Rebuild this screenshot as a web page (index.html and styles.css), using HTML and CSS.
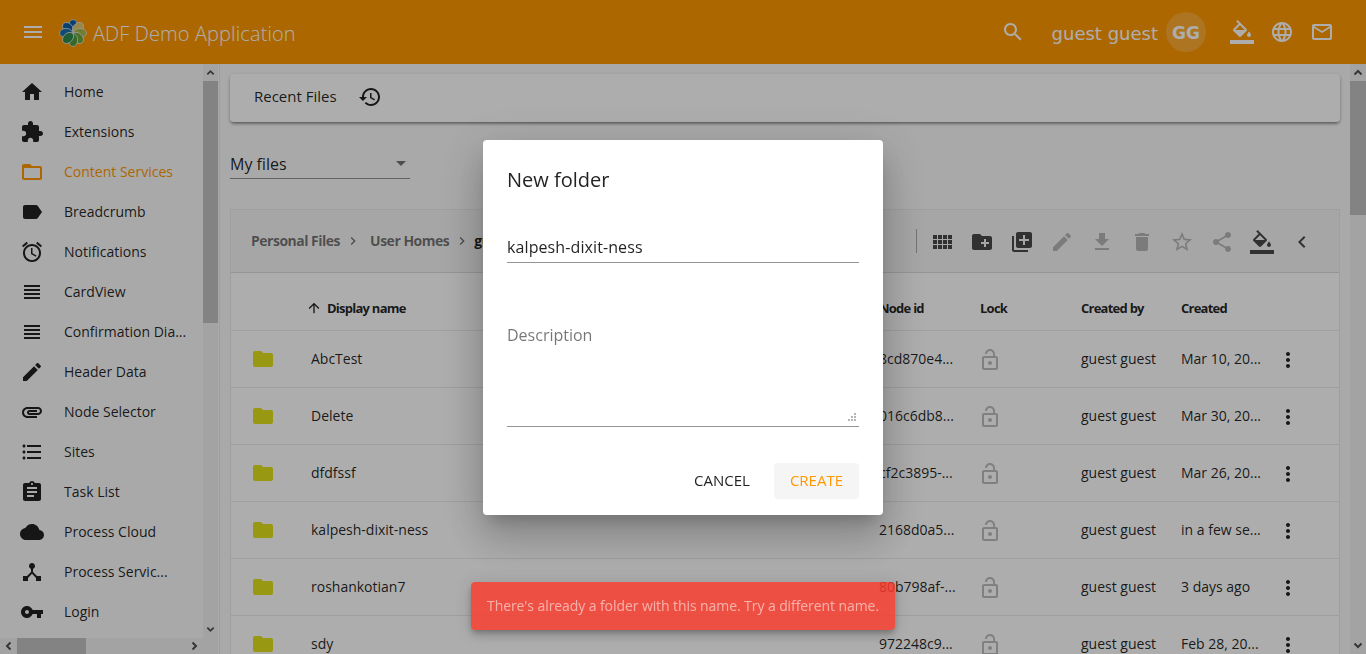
FILE: index.html
```html
<!DOCTYPE html>
<html lang="en">
<head>
    <meta charset="UTF-8">
    <meta name="viewport" content="width=device-width, initial-scale=1.0">
    <title>ADF Demo Application</title>
    <link rel="stylesheet" href="styles.css">
</head>
<body>

    <svg class="sprite" aria-hidden="true">
        <symbol id="i-menu" viewBox="0 0 24 24"><path d="M3 18h18v-2H3v2zm0-5h18v-2H3v2zm0-7v2h18V6H3z"/></symbol>
        <symbol id="i-home" viewBox="0 0 24 24"><path d="M10 20v-6h4v6h5v-8h3L12 3 2 12h3v8z"/></symbol>
        <symbol id="i-extension" viewBox="0 0 24 24"><path d="M20.5 11H19V7c0-1.1-.9-2-2-2h-4V3.5C13 2.12 11.88 1 10.5 1S8 2.12 8 3.5V5H4c-1.1 0-1.99.9-1.99 2v3.8H3.5c1.49 0 2.7 1.21 2.7 2.7s-1.21 2.7-2.7 2.7H2V20c0 1.1.9 2 2 2h3.8v-1.5c0-1.49 1.21-2.7 2.7-2.7 1.49 0 2.7 1.21 2.7 2.7V22H17c1.1 0 2-.9 2-2v-4h1.5c1.38 0 2.5-1.12 2.5-2.5S21.88 11 20.5 11z"/></symbol>
        <symbol id="i-folder-open" viewBox="0 0 24 24"><path d="M20 6h-8l-2-2H4c-1.1 0-1.99.9-1.99 2L2 18c0 1.1.9 2 2 2h16c1.1 0 2-.9 2-2V8c0-1.1-.9-2-2-2zm0 12H4V8h16v10z"/></symbol>
        <symbol id="i-label" viewBox="0 0 24 24"><path d="M17.63 5.84C17.27 5.33 16.67 5 16 5L5 5.01C3.9 5.01 3 5.9 3 7v10c0 1.1.9 1.99 2 1.99L16 19c.67 0 1.27-.33 1.63-.84L22 12l-4.37-6.16z"/></symbol>
        <symbol id="i-alarm" viewBox="0 0 24 24"><path d="M22 5.72l-4.6-3.86-1.29 1.53 4.6 3.86L22 5.72zM7.88 3.39L6.6 1.86 2 5.71l1.29 1.53 4.59-3.85zM12.5 8H11v6l4.75 2.85.75-1.23-4-2.37V8zM12 4c-4.97 0-9 4.03-9 9s4.02 9 9 9c4.97 0 9-4.03 9-9s-4.03-9-9-9zm0 16c-3.87 0-7-3.13-7-7s3.13-7 7-7 7 3.13 7 7-3.13 7-7 7z"/></symbol>
        <symbol id="i-headline" viewBox="0 0 24 24"><path d="M4 15h16v-2H4v2zm0 4h16v-2H4v2zm0-8h16V9H4v2zm0-6v2h16V5H4z"/></symbol>
        <symbol id="i-edit" viewBox="0 0 24 24"><path d="M3 17.25V21h3.75L17.81 9.94l-3.75-3.75L3 17.25zM20.71 7.04c.39-.39.39-1.02 0-1.41l-2.34-2.34c-.39-.39-1.02-.39-1.41 0l-1.83 1.83 3.75 3.75 1.83-1.83z"/></symbol>
        <symbol id="i-attachment" viewBox="0 0 24 24"><path d="M2 12.5C2 9.46 4.46 7 7.5 7H18c2.21 0 4 1.79 4 4s-1.79 4-4 4H9.5C8.12 15 7 13.88 7 12.5S8.12 10 9.5 10H17v2H9.41c-.55 0-.55 1 0 1H18c1.1 0 2-.9 2-2s-.9-2-2-2H7.5C5.57 9 4 10.57 4 12.5S5.57 16 7.5 16H17v2H7.5C4.46 18 2 15.54 2 12.5z"/></symbol>
        <symbol id="i-list" viewBox="0 0 24 24"><path d="M4 10.5c-.83 0-1.5.67-1.5 1.5s.67 1.5 1.5 1.5 1.5-.67 1.5-1.5-.67-1.5-1.5-1.5zm0-6c-.83 0-1.5.67-1.5 1.5S3.17 7.5 4 7.5 5.5 6.83 5.5 6 4.83 4.5 4 4.5zm0 12c-.83 0-1.5.68-1.5 1.5s.68 1.5 1.5 1.5 1.5-.68 1.5-1.5-.67-1.5-1.5-1.5zM7 19h14v-2H7v2zm0-6h14v-2H7v2zm0-8v2h14V5H7z"/></symbol>
        <symbol id="i-assignment" viewBox="0 0 24 24"><path d="M19 3h-4.18C14.4 1.84 13.3 1 12 1c-1.3 0-2.4.84-2.82 2H5c-1.1 0-2 .9-2 2v14c0 1.1.9 2 2 2h14c1.1 0 2-.9 2-2V5c0-1.1-.9-2-2-2zm-7 0c.55 0 1 .45 1 1s-.45 1-1 1-1-.45-1-1 .45-1 1-1zm2 14H7v-2h7v2zm3-4H7v-2h10v2zm0-4H7V7h10v2z"/></symbol>
        <symbol id="i-cloud" viewBox="0 0 24 24"><path d="M19.35 10.04C18.67 6.59 15.64 4 12 4 9.11 4 6.6 5.64 5.35 8.04 2.34 8.36 0 10.91 0 14c0 3.31 2.69 6 6 6h13c2.76 0 5-2.24 5-5 0-2.64-2.05-4.78-4.65-4.96z"/></symbol>
        <symbol id="i-hub" viewBox="0 0 24 24"><path d="M17 16l-4-4V8.82C14.16 8.4 15 7.3 15 6c0-1.66-1.34-3-3-3S9 4.34 9 6c0 1.3.84 2.4 2 2.82V12l-4 4H3v5h5v-3.05l4-4.2 4 4.2V21h5v-5h-4z"/></symbol>
        <symbol id="i-key" viewBox="0 0 24 24"><path d="M12.65 10C11.83 7.67 9.61 6 7 6c-3.31 0-6 2.69-6 6s2.69 6 6 6c2.61 0 4.83-1.67 5.65-4H17v4h4v-4h2v-4H12.65zM7 14c-1.1 0-2-.9-2-2s.9-2 2-2 2 .9 2 2-.9 2-2 2z"/></symbol>
        <symbol id="i-search" viewBox="0 0 24 24"><path d="M15.5 14h-.79l-.28-.27C15.41 12.59 16 11.11 16 9.5 16 5.91 13.09 3 9.5 3S3 5.91 3 9.5 5.91 16 9.5 16c1.61 0 3.09-.59 4.23-1.57l.27.28v.79l5 4.99L20.49 19l-4.99-5zm-6 0C7.01 14 5 11.99 5 9.5S7.01 5 9.5 5 14 7.01 14 9.5 11.99 14 9.5 14z"/></symbol>
        <symbol id="i-fill" viewBox="0 0 24 24"><path d="M16.56 8.94L7.62 0 6.21 1.41l2.38 2.38-5.15 5.15c-.59.59-.59 1.54 0 2.12l5.5 5.5c.29.29.68.44 1.06.44s.77-.15 1.06-.44l5.5-5.5c.59-.58.59-1.53 0-2.12zM5.21 10L10 5.21 14.79 10H5.21zM19 11.5s-2 2.17-2 3.5c0 1.1.9 2 2 2s2-.9 2-2c0-1.33-2-3.5-2-3.5z"/><path d="M0 20h24v4H0z"/></symbol>
        <symbol id="i-language" viewBox="0 0 24 24"><path d="M11.99 2C6.47 2 2 6.48 2 12s4.47 10 9.99 10C17.52 22 22 17.52 22 12S17.52 2 11.99 2zm6.93 6h-2.95c-.32-1.25-.78-2.45-1.38-3.56 1.84.63 3.37 1.91 4.33 3.56zM12 4.04c.83 1.2 1.48 2.53 1.91 3.96h-3.82c.43-1.43 1.08-2.76 1.91-3.96zM4.26 14C4.1 13.36 4 12.69 4 12s.1-1.36.26-2h3.38c-.08.66-.14 1.32-.14 2 0 .68.06 1.34.14 2H4.26zm.82 2h2.95c.32 1.25.78 2.45 1.38 3.56-1.84-.63-3.37-1.9-4.33-3.56zm2.95-8H5.08c.96-1.66 2.49-2.93 4.33-3.56C8.81 5.55 8.35 6.75 8.03 8zM12 19.96c-.83-1.2-1.48-2.53-1.91-3.96h3.82c-.43 1.43-1.08 2.76-1.91 3.96zM14.34 14H9.66c-.09-.66-.16-1.32-.16-2 0-.68.07-1.35.16-2h4.68c.09.65.16 1.32.16 2 0 .68-.07 1.34-.16 2zm.25 5.56c.6-1.11 1.06-2.31 1.38-3.56h2.95c-.96 1.65-2.49 2.93-4.33 3.56zM16.36 14c.08-.66.14-1.32.14-2 0-.68-.06-1.34-.14-2h3.38c.16.64.26 1.31.26 2s-.1 1.36-.26 2h-3.38z"/></symbol>
        <symbol id="i-mail" viewBox="0 0 24 24"><path d="M20 4H4c-1.1 0-1.99.9-1.99 2L2 18c0 1.1.9 2 2 2h16c1.1 0 2-.9 2-2V6c0-1.1-.9-2-2-2zm0 14H4V8l8 5 8-5v10zm-8-7L4 6h16l-8 5z"/></symbol>
        <symbol id="i-history" viewBox="0 0 24 24"><path d="M13 3c-4.97 0-9 4.03-9 9H1l3.89 3.89.07.14L9 12H6c0-3.87 3.13-7 7-7s7 3.13 7 7-3.13 7-7 7c-1.93 0-3.68-.79-4.94-2.06l-1.42 1.42C8.27 19.99 10.51 21 13 21c4.97 0 9-4.03 9-9s-4.03-9-9-9zm-1 5v5l4.28 2.54.72-1.21-3.5-2.08V8H12z"/></symbol>
        <symbol id="i-grid" viewBox="0 0 24 24"><path d="M3 9h4V5H3v4zm0 5h4v-4H3v4zm5 0h4v-4H8v4zm5 0h4v-4h-4v4zM8 9h4V5H8v4zm5-4v4h4V5h-4zm5 9h4v-4h-4v4zM3 19h4v-4H3v4zm5 0h4v-4H8v4zm5 0h4v-4h-4v4zm5 0h4v-4h-4v4zm0-14v4h4V5h-4z"/></symbol>
        <symbol id="i-new-folder" viewBox="0 0 24 24"><path d="M20 6h-8l-2-2H4c-1.11 0-1.99.89-1.99 2L2 18c0 1.11.89 2 2 2h16c1.11 0 2-.89 2-2V8c0-1.11-.89-2-2-2zm-1 8h-3v3h-2v-3h-3v-2h3V9h2v3h3v2z"/></symbol>
        <symbol id="i-library-add" viewBox="0 0 24 24"><path d="M4 6H2v14c0 1.1.9 2 2 2h14v-2H4V6zm16-4H8c-1.1 0-2 .9-2 2v12c0 1.1.9 2 2 2h12c1.1 0 2-.9 2-2V4c0-1.1-.9-2-2-2zm-1 9h-4v4h-2v-4H9V9h4V5h2v4h4v2z"/></symbol>
        <symbol id="i-download" viewBox="0 0 24 24"><path d="M19 9h-4V3H9v6H5l7 7 7-7zM5 18v2h14v-2H5z"/></symbol>
        <symbol id="i-delete" viewBox="0 0 24 24"><path d="M6 19c0 1.1.9 2 2 2h8c1.1 0 2-.9 2-2V7H6v12zM19 4h-3.5l-1-1h-5l-1 1H5v2h14V4z"/></symbol>
        <symbol id="i-star" viewBox="0 0 24 24"><path d="M22 9.24l-7.19-.62L12 2 9.19 8.63 2 9.24l5.46 4.73L5.82 21 12 17.27 18.18 21l-1.63-7.03L22 9.24zM12 15.4l-3.76 2.27 1-4.28-3.32-2.88 4.38-.38L12 6.1l1.71 4.04 4.38.38-3.32 2.88 1 4.28L12 15.4z"/></symbol>
        <symbol id="i-share" viewBox="0 0 24 24"><path d="M18 16.08c-.76 0-1.44.3-1.96.77L8.91 12.7c.05-.23.09-.46.09-.7s-.04-.47-.09-.7l7.05-4.11c.54.5 1.25.81 2.04.81 1.66 0 3-1.34 3-3s-1.34-3-3-3-3 1.34-3 3c0 .24.04.47.09.7L8.04 9.81C7.5 9.31 6.79 9 6 9c-1.66 0-3 1.34-3 3s1.34 3 3 3c.79 0 1.5-.31 2.04-.81l7.12 4.16c-.05.21-.08.43-.08.65 0 1.61 1.31 2.92 2.92 2.92 1.61 0 2.92-1.31 2.92-2.92s-1.31-2.92-2.92-2.92z"/></symbol>
        <symbol id="i-chevron-left" viewBox="0 0 24 24"><path d="M15.41 7.41L14 6l-6 6 6 6 1.41-1.41L10.83 12z"/></symbol>
        <symbol id="i-chevron-right" viewBox="0 0 24 24"><path d="M10 6L8.59 7.41 13.17 12l-4.58 4.59L10 18l6-6z"/></symbol>
        <symbol id="i-lock-open" viewBox="0 0 24 24"><path d="M12 17c1.1 0 2-.9 2-2s-.9-2-2-2-2 .9-2 2 .9 2 2 2zm6-9h-1V6c0-2.76-2.24-5-5-5S7 3.24 7 6h1.9c0-1.71 1.39-3.1 3.1-3.1 1.71 0 3.1 1.39 3.1 3.1v2H6c-1.1 0-2 .9-2 2v10c0 1.1.9 2 2 2h12c1.1 0 2-.9 2-2V10c0-1.1-.9-2-2-2zm0 12H6V10h12v10z"/></symbol>
        <symbol id="i-more" viewBox="0 0 24 24"><path d="M12 8c1.1 0 2-.9 2-2s-.9-2-2-2-2 .9-2 2 .9 2 2 2zm0 2c-1.1 0-2 .9-2 2s.9 2 2 2 2-.9 2-2-.9-2-2-2zm0 6c-1.1 0-2 .9-2 2s.9 2 2 2 2-.9 2-2-.9-2-2-2z"/></symbol>
        <symbol id="i-folder" viewBox="0 0 24 24"><path d="M10 4H4c-1.1 0-1.99.9-1.99 2L2 18c0 1.1.9 2 2 2h16c1.1 0 2-.9 2-2V8c0-1.1-.9-2-2-2h-8l-2-2z"/></symbol>
        <symbol id="i-arrow-up" viewBox="0 0 24 24"><path d="M4 12l1.41 1.41L11 7.83V20h2V7.83l5.58 5.59L20 12l-8-8-8 8z"/></symbol>
        <symbol id="i-sb-up" viewBox="0 0 10 10"><path d="M1.5 7L5 3.5 8.5 7" fill="none" stroke="currentColor" stroke-width="2"/></symbol>
        <symbol id="i-sb-down" viewBox="0 0 10 10"><path d="M1.5 3L5 6.5 8.5 3" fill="none" stroke="currentColor" stroke-width="2"/></symbol>
        <symbol id="i-sb-left" viewBox="0 0 10 10"><path d="M7 1.5L3.5 5 7 8.5" fill="none" stroke="currentColor" stroke-width="2"/></symbol>
        <symbol id="i-sb-right" viewBox="0 0 10 10"><path d="M3 1.5L6.5 5 3 8.5" fill="none" stroke="currentColor" stroke-width="2"/></symbol>
    </svg>

    <header class="app-header">
        <svg class="icon header-menu"><use href="#i-menu"/></svg>
        <svg class="logo" viewBox="0 0 28 28">
            <g stroke="#e8e8e8" stroke-width="0.8">
                <ellipse cx="14" cy="7" rx="4.6" ry="6.4" fill="#0b5fa5"/>
                <ellipse cx="14" cy="7" rx="4.6" ry="6.4" fill="#0b5fa5" transform="rotate(-45 14 14)"/>
                <ellipse cx="14" cy="7" rx="4.6" ry="6.4" fill="#1a6fa8" transform="rotate(-90 14 14)"/>
                <ellipse cx="14" cy="7" rx="4.6" ry="6.4" fill="#e0c46c" transform="rotate(45 14 14)"/>
                <ellipse cx="14" cy="7" rx="4.6" ry="6.4" fill="#a8b84a" transform="rotate(90 14 14)"/>
                <ellipse cx="14" cy="7" rx="4.6" ry="6.4" fill="#6aa83c" transform="rotate(135 14 14)"/>
                <ellipse cx="14" cy="7" rx="4.6" ry="6.4" fill="#4f9a3a" transform="rotate(180 14 14)"/>
                <ellipse cx="14" cy="7" rx="4.6" ry="6.4" fill="#2f8a4a" transform="rotate(225 14 14)"/>
            </g>
        </svg>
        <span class="app-title">ADF Demo Application</span>
        <span class="header-spacer"></span>
        <svg class="icon header-search"><use href="#i-search"/></svg>
        <span class="user-name">guest guest</span>
        <span class="avatar">GG</span>
        <svg class="icon header-action"><use href="#i-fill"/></svg>
        <svg class="icon header-action"><use href="#i-language"/></svg>
        <svg class="icon header-action"><use href="#i-mail"/></svg>
    </header>

    <div class="shell">
        <aside class="sidebar">
            <div class="sidebar-col">
                <nav class="nav-list">
                    <a class="nav-item"><svg class="icon"><use href="#i-home"/></svg><span class="nav-text">Home</span></a>
                    <a class="nav-item"><svg class="icon"><use href="#i-extension"/></svg><span class="nav-text">Extensions</span></a>
                    <a class="nav-item active"><svg class="icon"><use href="#i-folder-open"/></svg><span class="nav-text">Content Services</span></a>
                    <a class="nav-item"><svg class="icon"><use href="#i-label"/></svg><span class="nav-text">Breadcrumb</span></a>
                    <a class="nav-item"><svg class="icon"><use href="#i-alarm"/></svg><span class="nav-text">Notifications</span></a>
                    <a class="nav-item"><svg class="icon"><use href="#i-headline"/></svg><span class="nav-text">CardView</span></a>
                    <a class="nav-item"><svg class="icon"><use href="#i-headline"/></svg><span class="nav-text">Confirmation Dia...</span></a>
                    <a class="nav-item"><svg class="icon"><use href="#i-edit"/></svg><span class="nav-text">Header Data</span></a>
                    <a class="nav-item"><svg class="icon"><use href="#i-attachment"/></svg><span class="nav-text">Node Selector</span></a>
                    <a class="nav-item"><svg class="icon"><use href="#i-list"/></svg><span class="nav-text">Sites</span></a>
                    <a class="nav-item"><svg class="icon"><use href="#i-assignment"/></svg><span class="nav-text">Task List</span></a>
                    <a class="nav-item"><svg class="icon"><use href="#i-cloud"/></svg><span class="nav-text">Process Cloud</span></a>
                    <a class="nav-item"><svg class="icon"><use href="#i-hub"/></svg><span class="nav-text">Process Servic...</span></a>
                    <a class="nav-item"><svg class="icon"><use href="#i-key"/></svg><span class="nav-text">Login</span></a>
                </nav>
                <div class="hscroll">
                    <svg class="sb-arrow-h"><use href="#i-sb-left"/></svg>
                    <div class="hscroll-thumb"></div>
                    <span class="header-spacer"></span>
                    <svg class="sb-arrow-h"><use href="#i-sb-right"/></svg>
                </div>
            </div>
            <div class="vscroll sidebar-scroll">
                <svg class="sb-arrow"><use href="#i-sb-up"/></svg>
                <div class="vscroll-thumb sidebar-thumb"></div>
                <span class="header-spacer"></span>
                <svg class="sb-arrow"><use href="#i-sb-down"/></svg>
            </div>
        </aside>

        <main class="content">
            <div class="tab-card">
                <span class="tab-label">Recent Files</span>
                <svg class="icon"><use href="#i-history"/></svg>
            </div>

            <div class="site-select">
                <span class="select-value">My files</span>
                <span class="select-arrow"></span>
            </div>

            <section class="doc-list">
                <div class="doc-toolbar">
                    <div class="crumbs">
                        <span>Personal Files</span>
                        <svg class="crumb-sep"><use href="#i-chevron-right"/></svg>
                        <span>User Homes</span>
                        <svg class="crumb-sep"><use href="#i-chevron-right"/></svg>
                        <span class="crumb-current">guest</span>
                    </div>
                    <span class="toolbar-divider"></span>
                    <svg class="icon tool"><use href="#i-grid"/></svg>
                    <svg class="icon tool"><use href="#i-new-folder"/></svg>
                    <svg class="icon tool"><use href="#i-library-add"/></svg>
                    <svg class="icon tool off"><use href="#i-edit"/></svg>
                    <svg class="icon tool off"><use href="#i-download"/></svg>
                    <svg class="icon tool off"><use href="#i-delete"/></svg>
                    <svg class="icon tool off"><use href="#i-star"/></svg>
                    <svg class="icon tool off"><use href="#i-share"/></svg>
                    <svg class="icon tool"><use href="#i-fill"/></svg>
                    <svg class="icon tool"><use href="#i-chevron-left"/></svg>
                </div>

                <div class="doc-row doc-head">
                    <span></span>
                    <span class="head-name"><svg class="sort-icon"><use href="#i-arrow-up"/></svg>Display name</span>
                    <span>Node id</span>
                    <span>Lock</span>
                    <span>Created by</span>
                    <span>Created</span>
                    <span></span>
                </div>

                <div class="doc-row">
                    <svg class="icon folder-icon"><use href="#i-folder"/></svg>
                    <span>AbcTest</span>
                    <span>8cd870e4...</span>
                    <svg class="icon lock-icon"><use href="#i-lock-open"/></svg>
                    <span>guest guest</span>
                    <span>Mar 10, 20...</span>
                    <svg class="icon more-icon"><use href="#i-more"/></svg>
                </div>
                <div class="doc-row">
                    <svg class="icon folder-icon"><use href="#i-folder"/></svg>
                    <span>Delete</span>
                    <span>016c6db8...</span>
                    <svg class="icon lock-icon"><use href="#i-lock-open"/></svg>
                    <span>guest guest</span>
                    <span>Mar 30, 20...</span>
                    <svg class="icon more-icon"><use href="#i-more"/></svg>
                </div>
                <div class="doc-row">
                    <svg class="icon folder-icon"><use href="#i-folder"/></svg>
                    <span>dfdfssf</span>
                    <span>cf2c3895-...</span>
                    <svg class="icon lock-icon"><use href="#i-lock-open"/></svg>
                    <span>guest guest</span>
                    <span>Mar 26, 20...</span>
                    <svg class="icon more-icon"><use href="#i-more"/></svg>
                </div>
                <div class="doc-row">
                    <svg class="icon folder-icon"><use href="#i-folder"/></svg>
                    <span>kalpesh-dixit-ness</span>
                    <span>2168d0a5...</span>
                    <svg class="icon lock-icon"><use href="#i-lock-open"/></svg>
                    <span>guest guest</span>
                    <span>in a few se...</span>
                    <svg class="icon more-icon"><use href="#i-more"/></svg>
                </div>
                <div class="doc-row">
                    <svg class="icon folder-icon"><use href="#i-folder"/></svg>
                    <span>roshankotian7</span>
                    <span>80b798af-...</span>
                    <svg class="icon lock-icon"><use href="#i-lock-open"/></svg>
                    <span>guest guest</span>
                    <span>3 days ago</span>
                    <svg class="icon more-icon"><use href="#i-more"/></svg>
                </div>
                <div class="doc-row">
                    <svg class="icon folder-icon"><use href="#i-folder"/></svg>
                    <span>sdy</span>
                    <span>972248c9...</span>
                    <svg class="icon lock-icon"><use href="#i-lock-open"/></svg>
                    <span>guest guest</span>
                    <span>Feb 28, 20...</span>
                    <svg class="icon more-icon"><use href="#i-more"/></svg>
                </div>
            </section>
        </main>

        <div class="vscroll">
            <svg class="sb-arrow"><use href="#i-sb-up"/></svg>
            <div class="vscroll-thumb main-thumb"></div>
            <span class="header-spacer"></span>
            <svg class="sb-arrow"><use href="#i-sb-down"/></svg>
        </div>
    </div>

    <div class="backdrop"></div>

    <div class="dialog-wrap">
        <form class="dialog">
            <h2 class="dialog-title">New folder</h2>
            <input class="field-input" type="text" value="kalpesh-dixit-ness">
            <div class="field-area">
                <textarea class="field-textarea" placeholder="Description"></textarea>
                <svg class="resize-grip" viewBox="0 0 8 8">
                    <rect x="6" y="0" width="2" height="2"/>
                    <rect x="3" y="3" width="2" height="2"/>
                    <rect x="6" y="3" width="2" height="2"/>
                    <rect x="0" y="6" width="2" height="2"/>
                    <rect x="3" y="6" width="2" height="2"/>
                    <rect x="6" y="6" width="2" height="2"/>
                </svg>
            </div>
            <div class="dialog-actions">
                <button class="btn" type="button">CANCEL</button>
                <button class="btn btn-create" type="button">CREATE</button>
            </div>
        </form>
    </div>

    <div class="toast"><span class="toast-text">There's already a folder with this name. Try a different name.</span></div>

</body>
</html>
```

FILE: styles.css
```css
* {
    box-sizing: border-box;
}
html, body {
    height: 100%;
}
body {
    margin: 0;
    display: flex;
    flex-direction: column;
    overflow: hidden;
    font-family: "Open Sans", "Noto Sans", sans-serif;
    font-size: 14px;
    color: rgba(0, 0, 0, 0.87);
    background-color: #fafafa;
}
.sprite {
    display: none;
}
.icon {
    width: 24px;
    height: 24px;
    flex: none;
    fill: currentColor;
}

/* header */
.app-header {
    height: 64px;
    flex: none;
    display: flex;
    align-items: center;
    padding-left: 21px;
    padding-right: 32px;
    background-color: #ff9800;
    color: #fff;
}
.header-menu {
    width: 24px;
}
.logo {
    width: 28px;
    height: 28px;
    margin-left: 14px;
    margin-top: 2px;
}
.app-title {
    margin-left: 6px;
    padding-top: 2px;
    font-size: 20px;
    font-weight: 300;
    letter-spacing: 0.1px;
}
.header-spacer {
    flex: 1;
}
.header-search {
    margin-right: 27px;
}
.user-name {
    padding-top: 2px;
    font-family: "DejaVu Sans", sans-serif;
    font-size: 18px;
    margin-right: 8px;
}
.avatar {
    width: 40px;
    height: 40px;
    margin-right: 8px;
    padding-top: 1px;
    border-radius: 50%;
    display: flex;
    align-items: center;
    justify-content: center;
    font-family: "DejaVu Sans", sans-serif;
    font-size: 17px;
    font-weight: 700;
    background-color: rgba(255, 255, 255, 0.2);
}
.header-action {
    margin-left: 16px;
}

/* layout */
.shell {
    flex: 1;
    min-height: 0;
    display: flex;
}

/* sidebar */
.sidebar {
    width: 220px;
    flex: none;
    display: flex;
    border-right: 1px solid rgba(0, 0, 0, 0.06);
}
.sidebar-col {
    width: 203px;
    display: flex;
    flex-direction: column;
}
.nav-list {
    flex: 1;
    padding-top: 8px;
    overflow: hidden;
}
.nav-item {
    height: 40px;
    display: flex;
    align-items: center;
    padding-left: 20px;
    gap: 20px;
}
.nav-item.active {
    color: #ff9800;
}
.nav-text {
    padding-bottom: 2px;
    white-space: nowrap;
}

/* fake scrollbars */
.vscroll {
    width: 16px;
    flex: none;
    display: flex;
    flex-direction: column;
    background-color: #f1f1f1;
}
.sidebar-scroll {
    width: 15px;
    padding-bottom: 16px;
}
.vscroll-thumb {
    flex: none;
    background-color: #c1c1c1;
}
.sidebar-thumb {
    height: 242px;
}
.main-thumb {
    height: 134px;
}
.sb-arrow {
    width: 100%;
    height: 17px;
    padding: 3px;
    flex: none;
    color: #505050;
}
.hscroll {
    height: 16px;
    flex: none;
    display: flex;
    background-color: #f1f1f1;
}
.hscroll-thumb {
    width: 69px;
    background-color: #c1c1c1;
}
.sb-arrow-h {
    width: 17px;
    height: 16px;
    padding: 3px;
    flex: none;
    color: #505050;
}

/* content */
.content {
    flex: 1;
    min-width: 0;
    padding: 10px 10px 0;
    overflow: hidden;
}
.tab-card {
    height: 48px;
    display: flex;
    align-items: center;
    gap: 21px;
    padding-left: 24px;
    padding-bottom: 2px;
    background-color: #fff;
    border-radius: 4px;
    box-shadow: 0 3px 3px -2px rgba(0, 0, 0, 0.3), 0 2px 3px 0 rgba(0, 0, 0, 0.2), 0 1px 5px 0 rgba(0, 0, 0, 0.12);
}
.tab-label {
    padding-bottom: 2px;
    font-size: 15px;
}
.site-select {
    width: 180px;
    height: 31px;
    margin-top: 26px;
    display: flex;
    align-items: center;
    justify-content: space-between;
    padding-right: 4px;
    font-size: 16px;
    border-bottom: 1px solid rgba(0, 0, 0, 0.42);
}
.select-value {
    padding-top: 2px;
}
.select-arrow {
    border-left: 5px solid transparent;
    border-right: 5px solid transparent;
    border-top: 5px solid rgba(0, 0, 0, 0.54);
}

/* document list */
.doc-list {
    margin-top: 30px;
    border: 1px solid rgba(0, 0, 0, 0.06);
    border-bottom: none;
}
.doc-toolbar {
    height: 63px;
    display: flex;
    align-items: center;
    padding-top: 2px;
    padding-right: 25px;
    background-color: #f5f5f5;
    border-bottom: 1px solid rgba(0, 0, 0, 0.1);
}
.crumbs {
    flex: 1;
    display: flex;
    align-items: center;
    padding-left: 20px;
    padding-bottom: 4px;
    font-weight: 700;
    letter-spacing: -0.5px;
    color: rgba(0, 0, 0, 0.54);
}
.crumb-sep {
    width: 16px;
    height: 16px;
    margin: 2px 9px 0 5px;
    fill: currentColor;
}
.crumb-current {
    margin-left: -5px;
    color: rgba(0, 0, 0, 0.87);
}
.toolbar-divider {
    width: 1px;
    height: 24px;
    margin-right: 13px;
    margin-bottom: 2px;
    background-color: rgba(0, 0, 0, 0.3);
}
.tool {
    margin-right: 16px;
    color: rgba(0, 0, 0, 0.7);
}
.tool:last-child {
    margin-right: 0;
}
.tool.off {
    color: rgba(0, 0, 0, 0.26);
}
.doc-row {
    height: 57px;
    display: grid;
    grid-template-columns: 80px 568px 101px 101px 100px 87px 1fr;
    align-items: center;
    background-color: #fff;
    border-bottom: 1px solid rgba(0, 0, 0, 0.08);
}
.doc-row > span {
    padding-bottom: 2px;
}
.doc-head {
    height: 58px;
    padding-top: 14px;
    font-size: 13px;
    font-weight: 700;
    letter-spacing: -0.75px;
}
.head-name {
    display: flex;
    align-items: center;
    margin-left: -5px;
    gap: 5px;
}
.sort-icon {
    width: 16px;
    height: 16px;
    fill: currentColor;
}
.folder-icon {
    margin-left: 20px;
    color: #e0e01c;
}
.lock-icon {
    margin-top: 2px;
    margin-left: -2px;
    color: rgba(0, 0, 0, 0.26);
}
.more-icon {
    margin-top: 2px;
    margin-left: 8px;
}

/* dialog on top of everything */
.backdrop {
    position: fixed;
    inset: 0;
    background-color: rgba(0, 0, 0, 0.32);
}
.dialog-wrap {
    position: fixed;
    left: 483px;
    top: 140px;
}
.dialog {
    width: 400px;
    height: 375px;
    padding: 24px 24px 16px;
    background-color: #fff;
    border-radius: 4px;
    box-shadow: 0 11px 15px -7px rgba(0, 0, 0, 0.2), 0 24px 38px 3px rgba(0, 0, 0, 0.14), 0 9px 46px 8px rgba(0, 0, 0, 0.12);
}
.dialog-title {
    margin: 0;
    font-size: 20px;
    font-weight: 400;
    line-height: 32px;
}
.field-input {
    display: block;
    width: 100%;
    height: 31px;
    margin-top: 36px;
    padding: 0;
    border: none;
    border-bottom: 1px solid rgba(0, 0, 0, 0.42);
    outline: none;
    font-family: inherit;
    font-size: 16px;
    letter-spacing: 0.1px;
    color: rgba(0, 0, 0, 0.87);
}
.field-area {
    position: relative;
    margin-top: 59px;
    border-bottom: 1px solid rgba(0, 0, 0, 0.42);
    padding-bottom: 3px;
}
.field-textarea {
    display: block;
    width: 351px;
    height: 101px;
    padding: 1px 0 0;
    border: none;
    outline: none;
    resize: none;
    font-family: inherit;
    font-size: 16px;
    line-height: 24px;
}
.field-textarea::placeholder {
    color: rgba(0, 0, 0, 0.54);
}
.resize-grip {
    position: absolute;
    right: 3px;
    bottom: 5px;
    width: 8px;
    height: 8px;
    fill: #b5b5b5;
}
.dialog-actions {
    margin-top: 36px;
    display: flex;
    justify-content: flex-end;
    gap: 8px;
}
.btn {
    height: 36px;
    padding: 0 16px 2px;
    border: none;
    border-radius: 4px;
    background: none;
    font-family: inherit;
    font-size: 15px;
    color: rgba(0, 0, 0, 0.87);
}
.btn-create {
    background-color: #f5f5f5;
    color: #ff9800;
}

/* snackbar */
.toast {
    position: fixed;
    left: 50%;
    bottom: 24px;
    transform: translateX(-50%);
    width: 424px;
    height: 48px;
    display: flex;
    align-items: center;
    justify-content: center;
    white-space: nowrap;
    background-color: rgba(252, 59, 44, 0.82);
    border-radius: 4px;
    box-shadow: 0 3px 5px -1px rgba(0, 0, 0, 0.2), 0 6px 10px 0 rgba(0, 0, 0, 0.14), 0 1px 18px 0 rgba(0, 0, 0, 0.12);
}
.toast-text {
    padding-bottom: 2px;
    letter-spacing: -0.08px;
    color: rgba(255, 255, 255, 0.55);
}
```
